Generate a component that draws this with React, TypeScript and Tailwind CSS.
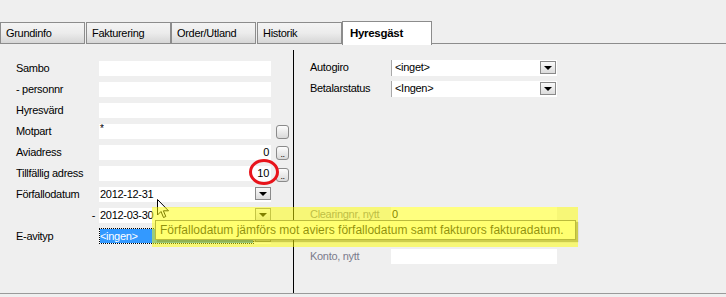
import React from "react";

const font = { fontFamily: '"Liberation Sans", Arial, sans-serif' };

function DropBtn() {
  return (
    <div className="w-[16px] h-[13px] border border-[#8a8a8a] bg-gradient-to-b from-[#fafafa] to-[#dcdcdc] flex items-end justify-center pb-[3px] shrink-0">
      <div className="w-0 h-0 border-l-[4px] border-r-[4px] border-t-[4px] border-l-transparent border-r-transparent border-t-black" />
    </div>
  );
}

function SmallBtn({ dots }: { dots?: boolean }) {
  return (
    <div className="w-[13px] h-[14px] ml-[5px] rounded-[3px] border border-[#8a8a8a] bg-gradient-to-b from-[#fdfdfd] to-[#d9d9d9] flex items-end justify-center shrink-0">
      {dots && <span className="text-[9px] leading-[9px] text-black tracking-[-0.5px]">..</span>}
    </div>
  );
}

function Row({ label, children, labelRight }: { label: string; children?: React.ReactNode; labelRight?: boolean }) {
  return (
    <div className="h-[15px] flex items-center">
      <div className={`w-[83px] shrink-0 ${labelRight ? "text-right pr-[4px]" : ""}`}>{label}</div>
      {children}
    </div>
  );
}

function Field({ value, right }: { value?: string; right?: boolean }) {
  return (
    <div className={`w-[172px] h-[15px] bg-white flex items-center px-[2px] ${right ? "justify-end" : ""}`}>
      {value}
    </div>
  );
}

function Combo({ value, selected }: { value: string; selected?: boolean }) {
  return (
    <div className="w-[172px] h-[15px] bg-white flex items-start">
      <div className={`flex-1 h-[14px] flex items-center ${selected ? "bg-[#3399ff] text-white ml-[1px] mr-[2px] outline outline-1 outline-dotted outline-black" : "pl-[1px]"}`}>
        {value}
      </div>
      <DropBtn />
    </div>
  );
}

function RightRow({ label, children, muted }: { label?: string; children?: React.ReactNode; muted?: boolean }) {
  return (
    <div className="h-[15px] flex items-center">
      <div className={`w-[81px] shrink-0 ${muted ? "text-[#7b7b8c]" : ""}`}>{label}</div>
      {children}
    </div>
  );
}

function RightCombo({ value }: { value: string }) {
  return (
    <div className="w-[166px] h-[16px] bg-white border-l border-[#a8a8a8] flex items-center pl-[3px] pr-[1px]">
      <div className="flex-1">{value}</div>
      <DropBtn />
    </div>
  );
}

const tabs = [
  { label: "Grundinfo", w: "w-[85px] mr-[1px]" },
  { label: "Fakturering", w: "w-[85px]" },
  { label: "Order/Utland", w: "w-[85px] mr-[1px]" },
  { label: "Historik", w: "w-[85px]" },
];

export default function App() {
  return (
    <div
      className="relative w-[726px] h-[297px] bg-[#efefef] text-[11px] tracking-[-0.3px] text-black overflow-hidden"
      style={font}
    >
      {/* Tab strip */}
      <div className="h-[45px] flex items-end">
        {tabs.map((t) => (
          <div
            key={t.label}
            className={`${t.w} h-[22px] border border-[#8c8c8c] bg-gradient-to-b from-[#f4f4f4] via-[#ececec] to-[#d6d6d6] flex items-center pl-[5px] mb-[1px]`}
          >
            {t.label}
          </div>
        ))}
        <div className="w-[90px] h-[24px] bg-white border-t border-l border-r border-[#8c8c8c] flex items-center pl-[7px] font-bold text-[11.5px]">
          Hyresgäst
        </div>
        <div className="flex-1 h-[1px] bg-[#8c8c8c] mb-[1px]" />
      </div>

      {/* Panel */}
      <div className="h-[249px] border-b border-[#9a9a9a] flex">
        {/* Left column */}
        <div className="w-[293px] pt-[16px] pl-[16px] flex flex-col gap-[6px]">
          <Row label="Sambo"><Field /></Row>
          <Row label="- personnr"><Field /></Row>
          <Row label="Hyresvärd"><Field /></Row>
          <Row label="Motpart">
            <div className="w-[172px] h-[15px] bg-white pl-[1px] leading-[9px] text-[10px]">*</div>
            <SmallBtn />
          </Row>
          <Row label="Aviadress">
            <Field value="0" right />
            <SmallBtn dots />
          </Row>
          <Row label="Tillfällig adress">
            <Field value="10" right />
            <div className="mt-[3px]"><SmallBtn dots /></div>
          </Row>
          <Row label="Förfallodatum"><Combo value="2012-12-31" /></Row>
          <Row label="-" labelRight><Combo value="2012-03-30" /></Row>
          <Row label="E-avityp"><Combo value="<ingen>" selected /></Row>
        </div>

        {/* Divider */}
        <div className="w-px bg-black mt-[5px]" />

        {/* Right column */}
        <div className="flex-1 pt-[15px] pl-[16px] flex flex-col gap-[6px]">
          <RightRow label="Autogiro"><RightCombo value="<inget>" /></RightRow>
          <RightRow label="Betalarstatus"><RightCombo value="<Ingen>" /></RightRow>
          <RightRow />
          <RightRow />
          <RightRow />
          <RightRow />
          <RightRow />
          <RightRow label="Clearingnr, nytt" muted>
            <div className="w-[166px] h-[15px] bg-white pl-[1px] flex items-center">0</div>
          </RightRow>
          <RightRow />
          <RightRow label="Konto, nytt" muted>
            <div className="w-[166px] h-[15px] bg-white" />
          </RightRow>
        </div>
      </div>

      {/* Red annotation circle */}
      <svg className="absolute left-[248px] top-[158px]" width="32" height="28" viewBox="0 0 32 28">
        <ellipse cx="16" cy="14" rx="13.5" ry="11.5" fill="none" stroke="#e8141b" strokeWidth="3" />
      </svg>

      {/* Mouse cursor */}
      <svg className="absolute left-[157px] top-[199px]" width="13" height="20" viewBox="0 0 13 20">
        <path d="M0.5 0.5 L0.5 16 L4 12.5 L6.5 18.5 L8.8 17.5 L6.4 11.8 L11.5 11.8 Z" fill="white" stroke="black" strokeWidth="1" strokeLinejoin="miter" />
      </svg>

      {/* Tooltip */}
      <div
        className="absolute left-[155px] top-[220px] w-[421px] h-[20px] bg-[#ffffe1] border border-[#767676] shadow-[2px_2px_1px_rgba(0,0,0,0.35)] flex items-center pl-[4px] text-[12px] tracking-[0px] text-[#1e1e1e]"
        style={font}
      >
        Förfallodatum jämförs mot aviers förfallodatum samt fakturors fakturadatum.
      </div>

      {/* Yellow highlight */}
      <div className="absolute left-[152px] top-[207px] w-[426px] h-[40px] bg-[rgba(255,255,0,0.5)]" />
    </div>
  );
}
